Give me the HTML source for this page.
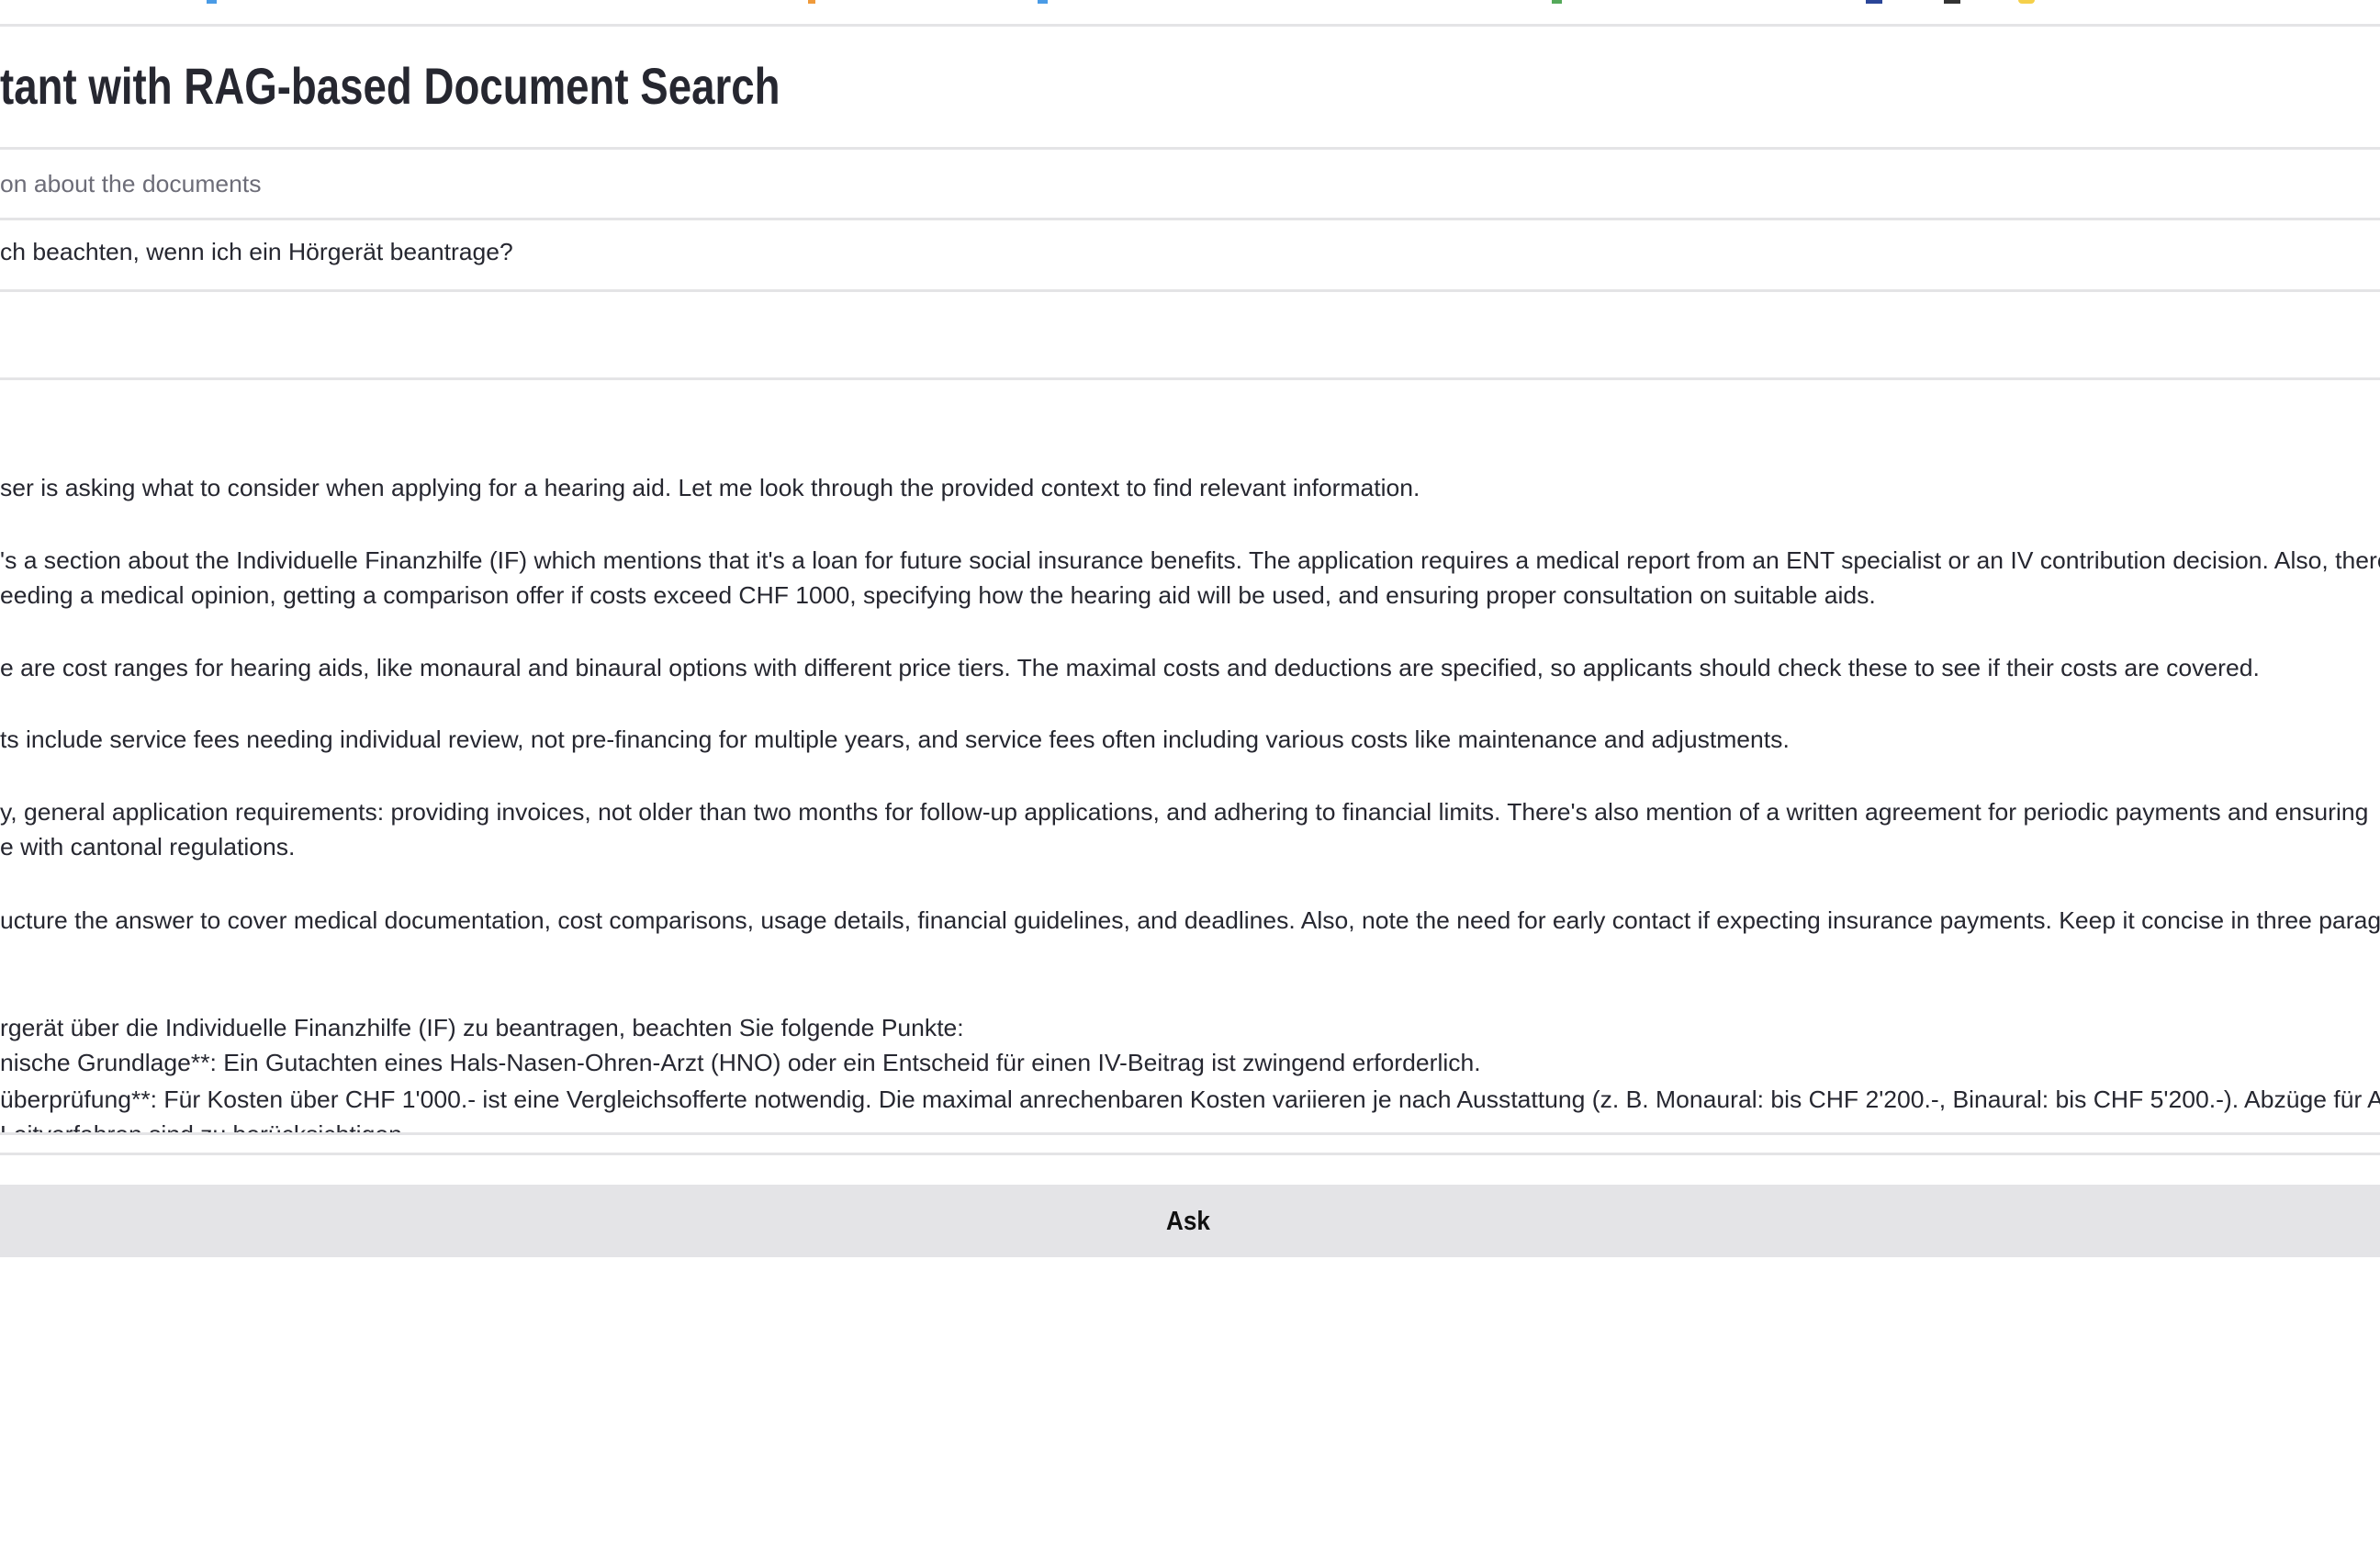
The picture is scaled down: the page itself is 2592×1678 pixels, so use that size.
<!DOCTYPE html>
<html><head><meta charset="utf-8">
<style>
html,body{margin:0;padding:0;width:2592px;height:1678px;overflow:hidden;background:#fff;font-family:"Liberation Sans",sans-serif;color:#31333f}
.hl{position:absolute;left:0;width:2592px;height:3px;background:#e4e4e6}
.t{position:absolute;left:0;white-space:nowrap;transform-origin:0 50%;transform:scaleX(1.02);font-size:26px;line-height:39px;height:39px;color:#262730}
.ic{position:absolute;top:0;height:4px}
</style></head><body>
<div class="ic" style="left:225px;width:11px;background:#4a9be6"></div>
<div class="ic" style="left:1130px;width:11px;background:#4a9be6"></div>
<div class="ic" style="left:1690px;width:11px;background:#55a95a"></div>
<div class="ic" style="left:2032px;width:18px;background:#2a4598"></div>
<div class="ic" style="left:2198px;width:18px;background:#f5d04a;border-radius:0 0 8px 8px"></div>
<div class="ic" style="left:2117px;width:18px;background:#333"></div>
<div class="ic" style="left:880px;width:8px;background:#f09a3a"></div>

<div class="hl" style="top:26px"></div>
<div style="position:absolute;left:0;top:62px;white-space:nowrap;font-weight:bold;font-size:56px;line-height:64px;color:#262730;transform-origin:0 50%;transform:scaleX(0.815)">tant with RAG-based Document Search</div>
<div class="hl" style="top:160px"></div>
<div class="t" style="top:181px;color:#6d6d78">on about the documents</div>
<div class="hl" style="top:237px"></div>
<div class="t" style="top:255px">ch beachten, wenn ich ein Hörgerät beantrage?</div>
<div class="hl" style="top:315px"></div>
<div class="hl" style="top:411px"></div>

<div class="t" style="top:512px">ser is asking what to consider when applying for a hearing aid. Let me look through the provided context to find relevant information.</div>
<div class="t" style="top:591px">'s a section about the Individuelle Finanzhilfe (IF) which mentions that it's a loan for future social insurance benefits. The application requires a medical report from an ENT specialist or an IV contribution decision. Also, there's</div>
<div class="t" style="top:629px">eeding a medical opinion, getting a comparison offer if costs exceed CHF 1000, specifying how the hearing aid will be used, and ensuring proper consultation on suitable aids.</div>
<div class="t" style="top:708px">e are cost ranges for hearing aids, like monaural and binaural options with different price tiers. The maximal costs and deductions are specified, so applicants should check these to see if their costs are covered.</div>
<div class="t" style="top:786px">ts include service fees needing individual review, not pre-financing for multiple years, and service fees often including various costs like maintenance and adjustments.</div>
<div class="t" style="top:865px">y, general application requirements: providing invoices, not older than two months for follow-up applications, and adhering to financial limits. There's also mention of a written agreement for periodic payments and ensuring</div>
<div class="t" style="top:903px">e with cantonal regulations.</div>
<div class="t" style="top:983px">ucture the answer to cover medical documentation, cost comparisons, usage details, financial guidelines, and deadlines. Also, note the need for early contact if expecting insurance payments. Keep it concise in three paragraphs</div>
<div class="t" style="top:1100px">rgerät über die Individuelle Finanzhilfe (IF) zu beantragen, beachten Sie folgende Punkte:</div>
<div class="t" style="top:1138px">nische Grundlage**: Ein Gutachten eines Hals-Nasen-Ohren-Arzt (HNO) oder ein Entscheid für einen IV-Beitrag ist zwingend erforderlich.</div>
<div class="t" style="top:1178px">überprüfung**: Für Kosten über CHF 1'000.- ist eine Vergleichsofferte notwendig. Die maximal anrechenbaren Kosten variieren je nach Ausstattung (z. B. Monaural: bis CHF 2'200.-, Binaural: bis CHF 5'200.-). Abzüge für AHV/IV-</div>
<div style="position:absolute;left:0;top:1200px;width:2592px;height:34px;overflow:hidden"><div class="t" style="top:16px">Leitverfahren sind zu berücksichtigen.</div></div>
<div class="hl" style="top:1233px"></div>
<div class="hl" style="top:1255px"></div>

<div style="position:absolute;left:0;top:1290px;width:2592px;height:79px;background:#e4e4e7"></div>
<div style="position:absolute;left:1270px;top:1310px;font-weight:bold;font-size:29px;line-height:40px;color:#111;transform-origin:0 50%;transform:scaleX(0.9)">Ask</div>
</body></html>
